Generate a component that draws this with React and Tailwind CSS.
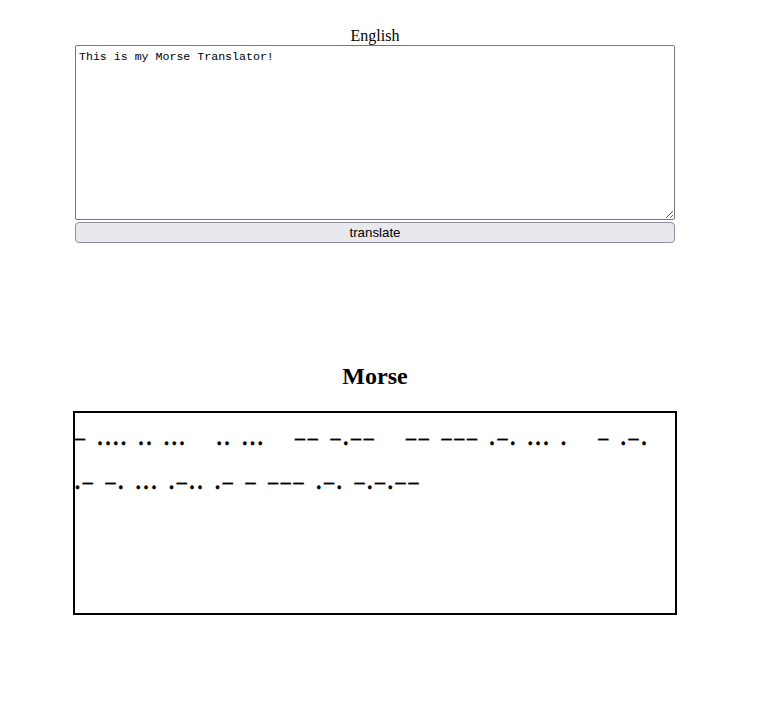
import React from "react";

const MORSE =
  "- .... .. ...   .. ...   -- -.--   -- --- .-. ... .   - .-. .- -. ... .-.. .- - --- .-. -.-.--";

export default function App() {
  const text = MORSE.replace(/-/g, "\u2013");
  return (
    <div className="w-[750px] bg-white pt-[27px] flex flex-col items-center" style={{ minHeight: 714 }}>
      <div className="w-[600px] flex flex-col">
        <label className="text-center text-[16px] leading-[18px] text-black font-['Liberation_Serif',serif]">
          English
        </label>
        <textarea
          defaultValue="This is my Morse Translator!"
          className="mt-0 w-[600px] h-[175px] border border-[#767676] rounded-[2px] px-[3px] py-[4px] text-[11.6px] leading-[14px] font-['Liberation_Mono',monospace] text-black resize-both"
        />
        <button className="mt-[2px] w-[600px] h-[21px] bg-[#e9e9ed] border border-[#8f8f9d] rounded-[4px] text-[13.3px] leading-[18px] text-black font-['Liberation_Sans',Arial,sans-serif]">
          translate
        </button>
      </div>
      <h2 className="mt-[119px] text-[24px] leading-[28px] font-bold text-black font-['Liberation_Serif',serif]">
        Morse
      </h2>
      <div className="mt-[21px] w-[604px] h-[204px] border-2 border-black pt-[3px] pr-[10px]">
        <p className="whitespace-pre-wrap text-[20px] leading-[44px] font-bold tracking-[2.8px] [word-spacing:2px] [-webkit-text-stroke:0.4px_black] text-black font-['Liberation_Serif',serif] break-words">
          {text}
        </p>
      </div>
    </div>
  );
}
